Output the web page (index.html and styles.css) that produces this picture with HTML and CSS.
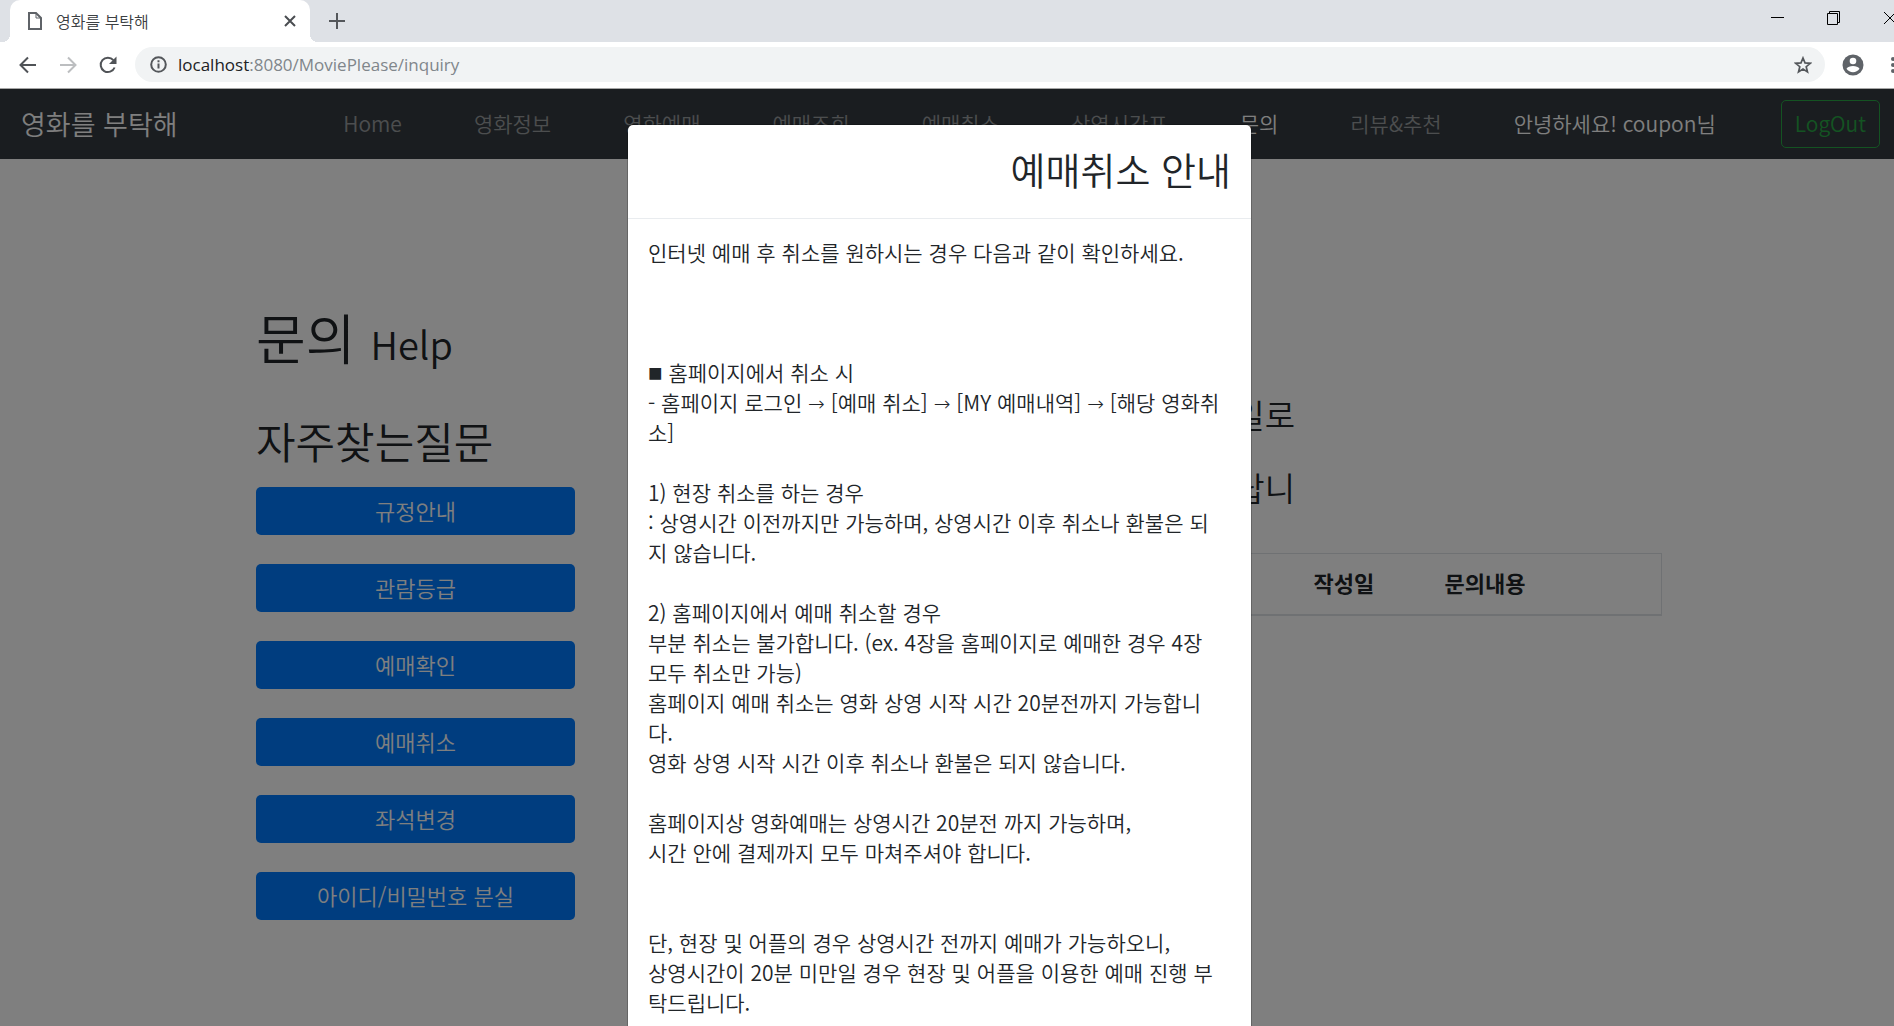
FILE: index.html
```html
<!DOCTYPE html>
<html lang="ko">
<head>
<meta charset="utf-8">
<title>영화를 부탁해</title>
<link rel="stylesheet" href="styles.css">
</head>
<body>
<header class="browser">
  <div class="tabstrip">
    <div class="tab">
      <svg class="tab-icon" width="14" height="20" viewBox="0 0 14 20" fill="none" stroke="#5f6368" stroke-width="2"><path d="M1 2H8L13 7V18H1Z"/><path d="M8 2V7H13" stroke-width="1"/></svg>
      <span class="tab-title">영화를 부탁해</span>
      <button class="icon-btn" aria-label="탭 닫기"><svg width="12" height="12" viewBox="0 0 12 12" stroke="#4a4d51" stroke-width="2"><path d="M1 1L11 11M11 1L1 11"/></svg></button>
    </div>
    <button class="icon-btn new-tab" aria-label="새 탭"><svg width="16" height="16" viewBox="0 0 16 16" stroke="#54575b" stroke-width="2"><path d="M8 0V16M0 8H16"/></svg></button>
    <div class="window-controls">
      <button class="icon-btn" aria-label="최소화"><svg width="14" height="14" viewBox="0 0 14 14" stroke="#000"><path d="M0 6.5H13"/></svg></button>
      <button class="icon-btn" aria-label="이전 크기로"><svg width="14" height="14" viewBox="0 0 14 14" fill="none" stroke="#000"><path d="M.5 2.5H10.5V13.5H.5ZM2.5 2.5V.5H12.5V11.5H10.5"/></svg></button>
      <button class="icon-btn" aria-label="닫기"><svg width="14" height="14" viewBox="0 0 14 14" stroke="#000"><path d="M1 1L13 13M13 1L1 13"/></svg></button>
    </div>
  </div>
  <div class="toolbar">
    <button class="icon-btn" aria-label="뒤로"><svg width="18" height="18" viewBox="0 0 18 18" fill="none" stroke="#505357" stroke-width="2"><path d="M17 9H2M9 1.5L1.5 9L9 16.5"/></svg></button>
    <button class="icon-btn" aria-label="앞으로"><svg width="18" height="18" viewBox="0 0 18 18" fill="none" stroke="#bcbec0" stroke-width="2"><path d="M1 9H16M9 1.5L16.5 9L9 16.5"/></svg></button>
    <button class="icon-btn" aria-label="새로고침"><svg width="18" height="18" viewBox="0 0 18 18" fill="none" stroke="#505357" stroke-width="2"><path d="M15.6 11.5A7.2 7.2 0 1 1 14.4 4.2"/><path d="M17.5 .5V8H10Z" fill="#505357" stroke="none"/></svg></button>
    <div class="omnibox">
      <svg width="17" height="17" viewBox="0 0 17 17" fill="none" stroke="#54575b" stroke-width="2"><circle cx="8.500" cy="8.500" r="7.300"/><path d="M8.500 7.500V12.500M8.500 4.200V6.200"/></svg>
      <span class="url"><b>localhost</b>:8080/MoviePlease/inquiry</span>
      <button class="icon-btn" aria-label="북마크"><svg width="18" height="18" viewBox="0 0 18 18" fill="none" stroke="#54575b" stroke-width="1.700"><path d="M9 2L11 6.900L16.300 7.300L12.200 10.700L13.500 16L9 13.100L4.500 16L5.800 10.700L1.700 7.300L7 6.900Z"/></svg></button>
    </div>
    <button class="icon-btn" aria-label="프로필"><svg width="22" height="22" viewBox="0 0 22 22"><circle cx="11" cy="11" r="10.500" fill="#5f6368"/><circle cx="11" cy="7" r="3.300" fill="#fff"/><path d="M4.500 14.700C6.500 11 15.500 11 17.500 14.700C14.500 19.300 7.500 19.300 4.500 14.700Z" fill="#fff"/></svg></button>
    <button class="icon-btn more" aria-label="메뉴"><svg width="4" height="18" viewBox="0 0 4 18" fill="#5f6368"><circle cx="2" cy="3" r="2"/><circle cx="2" cy="9" r="2"/><circle cx="2" cy="15" r="2"/></svg></button>
  </div>
</header>

<div class="viewport">
  <nav class="navbar">
    <a class="brand" href="#">영화를 부탁해</a>
    <ul class="menu">
      <li><a href="#">Home</a></li>
      <li><a href="#">영화정보</a></li>
      <li><a href="#">영화예매</a></li>
      <li><a href="#">예매조회</a></li>
      <li><a href="#">예매취소</a></li>
      <li><a href="#">상영시간표</a></li>
      <li><a class="active" href="#">문의</a></li>
      <li><a href="#">리뷰&amp;추천</a></li>
      <li><a class="active" href="#">안녕하세요! coupon님</a></li>
    </ul>
    <button class="logout">LogOut</button>
  </nav>

  <main class="content">
    <section class="faq">
      <h1>문의 <small>Help</small></h1>
      <h2>자주찾는질문</h2>
      <div class="faq-list">
        <button class="btn">규정안내</button>
        <button class="btn">관람등급</button>
        <button class="btn">예매확인</button>
        <button class="btn">예매취소</button>
        <button class="btn">좌석변경</button>
        <button class="btn">아이디/비밀번호 분실</button>
      </div>
    </section>
    <section class="inquiry">
      <div class="notice"><p>일로</p><p>랍니</p></div>
      <table>
        <thead><tr><th class="spacer"></th><th class="date">작성일</th><th class="text">문의내용</th></tr></thead>
      </table>
    </section>
  </main>

  <div class="backdrop">
    <div class="modal" role="dialog" aria-labelledby="modal-title">
      <div class="modal-header"><h3 id="modal-title">예매취소 안내</h3></div>
      <div class="modal-body">
        인터넷 예매 후 취소를 원하시는 경우 다음과 같이 확인하세요.<br>
        <br><br><br>
        <span class="square">■</span> 홈페이지에서 취소 시<br>
        - 홈페이지 로그인 <span class="arrow">→</span> [예매 취소] <span class="arrow">→</span> [MY 예매내역] <span class="arrow">→</span> [해당 영화취<br>소]<br>
        <br>
        1) 현장 취소를 하는 경우<br>
        : 상영시간 이전까지만 가능하며, 상영시간 이후 취소나 환불은 되<br>지 않습니다.<br>
        <br>
        2) 홈페이지에서 예매 취소할 경우<br>
        부분 취소는 불가합니다. (ex. 4장을 홈페이지로 예매한 경우 4장<br>모두 취소만 가능)<br>
        홈페이지 예매 취소는 영화 상영 시작 시간 20분전까지 가능합니<br>다.<br>
        영화 상영 시작 시간 이후 취소나 환불은 되지 않습니다.<br>
        <br>
        홈페이지상 영화예매는 상영시간 20분전 까지 가능하며,<br>
        시간 안에 결제까지 모두 마쳐주셔야 합니다.<br>
        <br><br>
        단, 현장 및 어플의 경우 상영시간 전까지 예매가 가능하오니,<br>
        상영시간이 20분 미만일 경우 현장 및 어플을 이용한 예매 진행 부<br>탁드립니다.
      </div>
    </div>
  </div>
</div>
</body>
</html>
```
FILE: styles.css
```css
* { box-sizing: border-box; }
body {
  margin: 0;
  height: 100vh;
  display: flex;
  flex-direction: column;
  overflow: hidden;
  font-family: "Noto Sans CJK KR", sans-serif;
  font-size: 21px;
  font-weight: 350;
  line-height: 30px;
  color: #212529;
  background: #fff;
}
h1, h2, h3, p, ul { margin: 0; padding: 0; font-weight: 350; }
a { color: inherit; text-decoration: none; }
button { font: inherit; }
svg { display: block; flex: none; }
.icon-btn { padding: 0; border: 0; background: none; flex: none; }

/* Browser frame */
.browser { flex: none; border-bottom: 1px solid #a6a6a6; }
.tabstrip {
  display: flex;
  align-items: center;
  height: 42px;
  padding-left: 10px;
  background: #dee1e6;
  overflow: hidden;
}
.tab {
  position: relative;
  display: flex;
  align-items: center;
  gap: 14px;
  width: 300px;
  height: 42px;
  padding: 0 14px 0 18px;
  border-radius: 10px 10px 0 0;
  background: #fff;
}
.tab::before,
.tab::after {
  content: "";
  position: absolute;
  bottom: 0;
  width: 8px;
  height: 8px;
}
.tab::before { right: 100%; background: radial-gradient(circle at 0 0, #dee1e6 8px, #fff 8px); }
.tab::after { left: 100%; background: radial-gradient(circle at 100% 0, #dee1e6 8px, #fff 8px); }
.tab-title { flex: 1; font-size: 16px; color: #3c4043; }
.new-tab { margin-left: 19px; }
.window-controls {
  display: flex;
  gap: 42px;
  margin-left: auto;
  margin-right: -3px;
  padding-bottom: 6px;
}
.toolbar {
  display: flex;
  align-items: center;
  gap: 22px;
  height: 46px;
  padding-left: 19px;
  padding-bottom: 1px;
  overflow: hidden;
}
.omnibox {
  flex: 1;
  display: flex;
  align-items: center;
  gap: 11px;
  height: 35px;
  margin-left: -4px;
  margin-right: -5px;
  padding: 0 13px 0 15px;
  border-radius: 18px;
  background: #f1f3f4;
}
.url {
  flex: 1;
  font-family: "Open Sans", sans-serif;
  font-size: 17px;
  font-weight: 400;
  color: #80868b;
}
.url b { font-weight: 400; color: #202124; }
.more { margin-right: -1px; margin-left: 5px; }

/* Page */
.viewport { position: relative; flex: 1; overflow: hidden; }
.navbar {
  display: flex;
  align-items: center;
  height: 70px;
  padding: 0 14px 0 21px;
  background: #343a40;
  white-space: nowrap;
}
.brand { font-size: 27px; color: #fff; }
.menu {
  flex: 1;
  display: flex;
  justify-content: flex-end;
  gap: 72px;
  margin-right: 65px;
  padding-bottom: 2px;
  list-style: none;
  color: rgba(255, 255, 255, .5);
}
.menu .active { color: #fff; }
.logout {
  height: 48px;
  padding: 0 13px 2px;
  border: 1px solid #28a745;
  border-radius: 5px;
  background: none;
  color: #28a745;
}
.content {
  display: grid;
  grid-template-columns: 319px 1fr;
  gap: 75px;
  padding: 146px 232px 0 256px;
}
h1 { font-size: 54px; line-height: 64px; }
h1 small { font-size: 38px; }
h2 { margin: 34px 0 17px; font-size: 43px; line-height: 60px; }
.faq-list { display: grid; gap: 29px; }
.btn {
  height: 48px;
  padding: 0 0 2px;
  border: 0;
  border-radius: 5px;
  background: #007bff;
  color: #fff;
  font-size: 22px;
}
.inquiry { padding-top: 73px; }
.notice {
  width: 645px;
  margin-bottom: 29px;
  font-size: 33px;
  line-height: 73px;
  text-align: right;
}
table {
  width: 100%;
  table-layout: fixed;
  border-collapse: collapse;
  border: 1px solid #dee2e6;
  font-size: 22px;
}
th {
  height: 61px;
  padding: 0 15px 4px;
  border-bottom: 2px solid #dee2e6;
  text-align: left;
  font-weight: 700;
}
.date { width: 131px; }
.text { width: 232px; }

/* Modal */
.backdrop {
  position: absolute;
  inset: 0;
  padding: 35px 15px 0 0;
  background: rgba(0, 0, 0, .5);
}
.modal {
  width: 625px;
  margin: 0 auto;
  min-height: 100%;
  border: 1px solid rgba(0, 0, 0, .2);
  border-radius: 6px;
  background: #fff;
  background-clip: padding-box;
}
.modal-header {
  display: flex;
  justify-content: flex-end;
  padding: 19px 20px 25px;
  border-bottom: 1px solid #e9ecef;
}
.modal-header h3 { font-size: 38px; line-height: 49px; }
.modal-body { padding: 18px 20px; white-space: nowrap; }
.square,
.arrow { font-family: "DejaVu Sans", sans-serif; line-height: 1; }
.square { font-size: 24px; }
.arrow { font-size: 20px; }
```
